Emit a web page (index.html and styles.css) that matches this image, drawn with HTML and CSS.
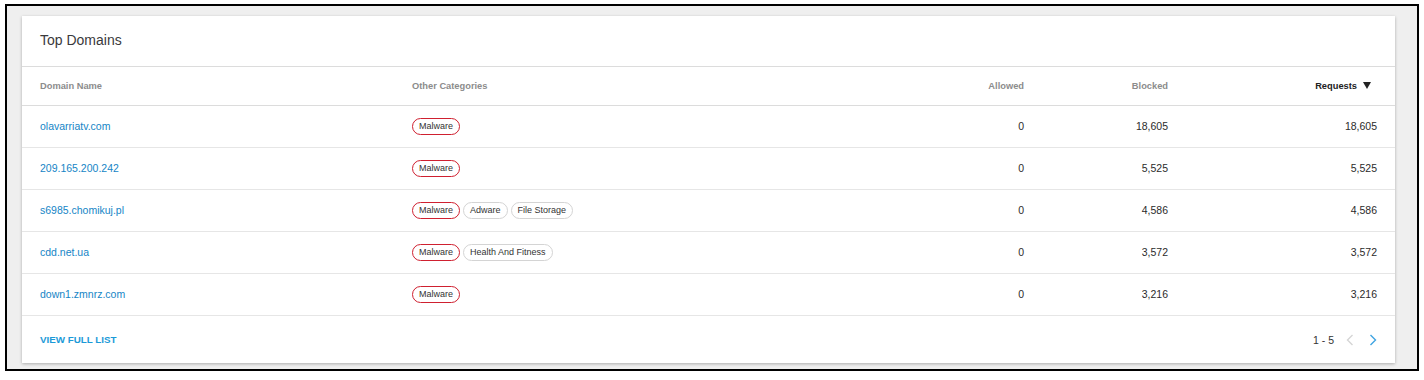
FILE: index.html
```html
<!DOCTYPE html>
<html>
<head>
<meta charset="utf-8">
<link rel="stylesheet" href="styles.css">
</head>
<body>
<div class="frame">
  <div class="card">
    <div class="card-title">Top Domains</div>
    <div class="row head">
      <div>Domain Name</div>
      <div>Other Categories</div>
      <div class="num">Allowed</div>
      <div class="num">Blocked</div>
      <div class="num sorted">Requests <span class="arrow"></span></div>
    </div>
    <div class="row">
      <div><a class="dom">olavarriatv.com</a></div>
      <div class="pills"><span class="pill red">Malware</span></div>
      <div class="num">0</div>
      <div class="num">18,605</div>
      <div class="num">18,605</div>
    </div>
    <div class="row">
      <div><a class="dom">209.165.200.242</a></div>
      <div class="pills"><span class="pill red">Malware</span></div>
      <div class="num">0</div>
      <div class="num">5,525</div>
      <div class="num">5,525</div>
    </div>
    <div class="row">
      <div><a class="dom">s6985.chomikuj.pl</a></div>
      <div class="pills"><span class="pill red">Malware</span><span class="pill">Adware</span><span class="pill">File Storage</span></div>
      <div class="num">0</div>
      <div class="num">4,586</div>
      <div class="num">4,586</div>
    </div>
    <div class="row">
      <div><a class="dom">cdd.net.ua</a></div>
      <div class="pills"><span class="pill red">Malware</span><span class="pill">Health And Fitness</span></div>
      <div class="num">0</div>
      <div class="num">3,572</div>
      <div class="num">3,572</div>
    </div>
    <div class="row">
      <div><a class="dom">down1.zmnrz.com</a></div>
      <div class="pills"><span class="pill red">Malware</span></div>
      <div class="num">0</div>
      <div class="num">3,216</div>
      <div class="num">3,216</div>
    </div>
    <div class="footer">
      <a class="view">VIEW FULL LIST</a>
      <div class="pager">
        <span class="range">1 - 5</span>
        <svg class="chev" width="8" height="12" viewBox="0 0 8 12"><path d="M6.5 1 L1.5 6 L6.5 11" fill="none" stroke="#d5d5d5" stroke-width="1.4"/></svg>
        <svg class="chev" width="8" height="12" viewBox="0 0 8 12"><path d="M1.5 1 L6.5 6 L1.5 11" fill="none" stroke="#3fa4e2" stroke-width="1.4"/></svg>
      </div>
    </div>
  </div>
</div>
</body>
</html>
```

FILE: styles.css
```css
html, body {
  margin: 0;
  padding: 0;
  background: #ffffff;
}
body {
  font-family: "Liberation Sans", Arial, sans-serif;
  color: #333;
}
.frame {
  margin: 4px 0 0 5px;
  border: 2px solid #000;
  background: #efefef;
  padding: 10px 22px 0 15px;
  box-sizing: border-box;
  width: 1414px;
  height: 367px;
}
.card {
  background: #fff;
  box-shadow: 0 1px 3px rgba(0,0,0,0.28);
  height: 347px;
}
.card-title {
  height: 51px;
  display: flex;
  align-items: center;
  padding: 0 18px 3px;
  font-size: 14px;
  color: #3a3a3c;
  border-bottom: 1px solid #dcdcdc;
  box-sizing: border-box;
}
.row {
  display: grid;
  grid-template-columns: 372px 1fr 144px 144px 209px;
  align-items: center;
  padding: 0 18px 1px 18px;
  height: 42px;
  box-sizing: border-box;
  border-bottom: 1px solid #e6e6e6;
  font-size: 10.5px;
  color: #2b2b2b;
}
.row.head {
  height: 39px;
  font-size: 9.3px;
  font-weight: bold;
  color: #8c8c8c;
  border-bottom: 1px solid #dcdcdc;
}
.num {
  text-align: right;
}
.head .sorted {
  color: #222;
  display: flex;
  justify-content: flex-end;
  align-items: center;
}
.arrow {
  display: inline-block;
  width: 0;
  height: 0;
  border-left: 4.5px solid transparent;
  border-right: 4.5px solid transparent;
  border-top: 7px solid #222;
  margin-left: 6px;
  margin-right: 6px;
}
.dom {
  color: #1585c6;
}
.pills {
  display: flex;
  gap: 3px;
}
.pill {
  display: inline-block;
  height: 17px;
  line-height: 15px;
  box-sizing: border-box;
  padding: 0 6px;
  border: 1px solid #d4d4d4;
  border-radius: 9px;
  font-size: 9px;
  color: #333;
}
.pill.red {
  border-color: #cf2030;
}
.footer {
  height: 47px;
  display: flex;
  align-items: center;
  justify-content: space-between;
  padding: 0 18px;
}
.view {
  color: #1b9ad8;
  font-weight: bold;
  font-size: 9.8px;
}
.pager {
  display: flex;
  align-items: center;
  font-size: 10.5px;
  color: #333;
}
.range {
  margin-right: 12px;
}
.chev + .chev {
  margin-left: 15px;
}
```
